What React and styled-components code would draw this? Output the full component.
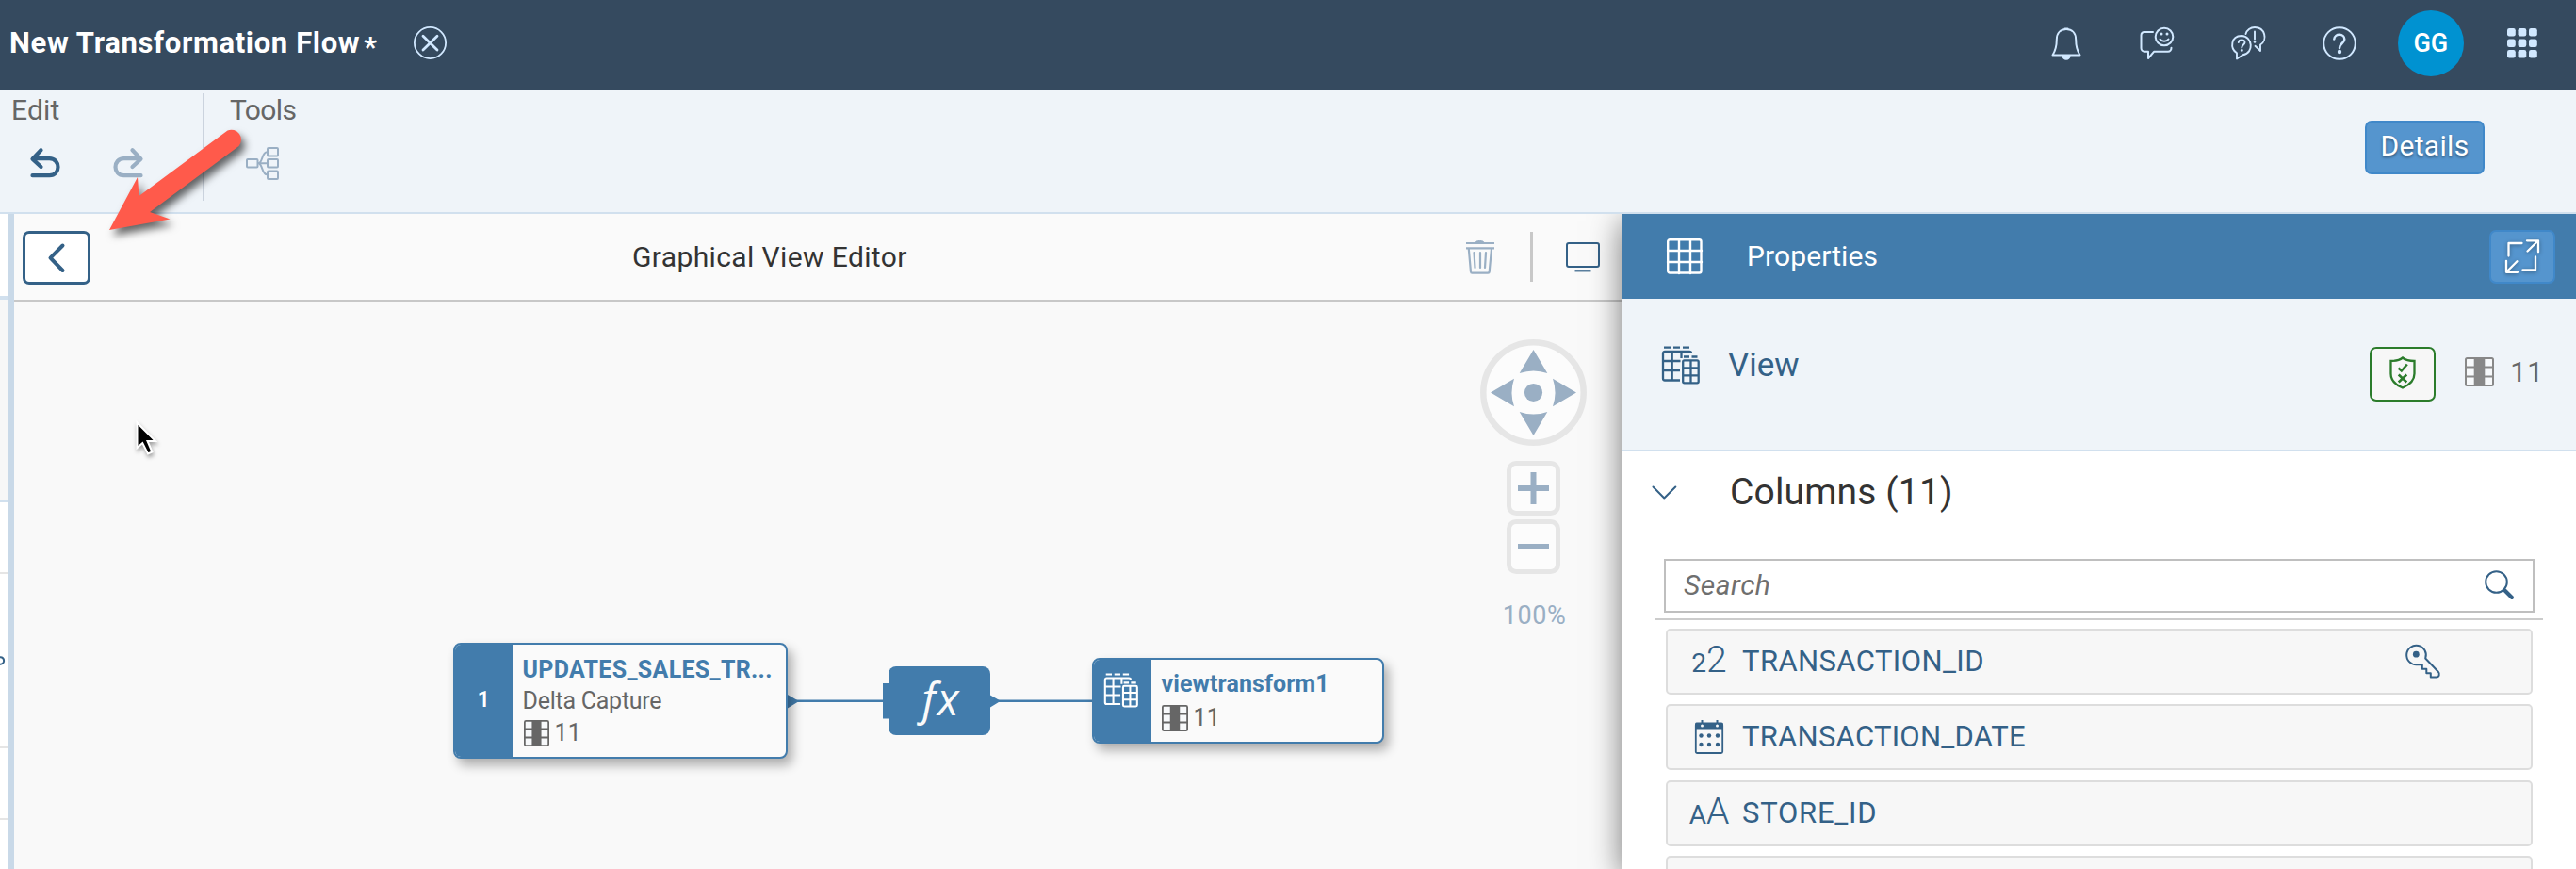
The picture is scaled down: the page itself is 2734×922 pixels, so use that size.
import React from "react";
import styled, { createGlobalStyle } from "styled-components";

const Global = createGlobalStyle`
  html, body { margin: 0; padding: 0; overflow: hidden; }
  * { box-sizing: border-box; }
  body { font-family: Roboto, "Liberation Sans", sans-serif; }
  button { font-family: inherit; }
  svg { display: block; flex: none; overflow: visible; }
`;

const c = {
  shell: "#354a5f",
  shellIcon: "#d1e8ff",
  brand: "#427cac",
  link: "#346187",
  muted: "#9aafc4",
  bar: "#eff4f9",
  line: "#d1e0ee",
  grey: "#666666",
};

const Label = styled.span`
  font-size: ${(p) => p.$size || 30}px;
  font-weight: ${(p) => p.$weight || 400};
  font-style: ${(p) => (p.$italic ? "italic" : "normal")};
  color: ${(p) => p.$color || "#333"};
  letter-spacing: ${(p) => p.$spacing || 0}px;
  line-height: ${(p) => p.$line || 36}px;
  white-space: nowrap;
`;

/* ---------- page frame ---------- */
const Page = styled.div`
  position: relative;
  display: flex;
  flex-direction: column;
  width: 2734px;
  height: 922px;
  overflow: hidden;
  background: #fff;
`;

const ShellBar = styled.header`
  display: flex;
  align-items: center;
  height: 95px;
  flex: none;
  padding: 0 9px 4px 10px;
  background: ${c.shell};
`;

const TitleStar = styled(Label)`
  margin: 8px 39px 0 4px;
`;

const ShellActions = styled.div`
  display: flex;
  margin-left: auto;
`;

const ShellAction = styled.button`
  display: flex;
  align-items: center;
  justify-content: center;
  width: 96.8px;
  height: 70px;
  padding: 0;
  border: 0;
  background: none;
`;

const Avatar = styled.span`
  display: flex;
  align-items: center;
  justify-content: center;
  width: 70px;
  height: 70px;
  border-radius: 50%;
  background: #0092d1;
`;

const Ribbon = styled.div`
  position: relative;
  z-index: 2;
  display: flex;
  height: 132px;
  flex: none;
  padding: 4px 97px 0 0;
  background: ${c.bar};
  border-bottom: 2px solid ${c.line};
`;

const RibbonGroup = styled.section`
  display: flex;
  flex-direction: column;
  height: 114px;
  width: ${(p) => p.$width}px;
  padding: 0 0 0 ${(p) => p.$pad}px;
  border-right: ${(p) => (p.$divided ? "2px solid #cbd3de" : "0")};
`;

const RibbonIcons = styled.div`
  display: flex;
  align-items: center;
  gap: 56px;
  height: 36px;
  margin-top: 20px;
  padding-left: ${(p) => p.$inset}px;
`;

const DetailsButton = styled.button`
  display: flex;
  align-items: center;
  justify-content: center;
  width: 127px;
  height: 57px;
  margin: 29px 0 0 auto;
  padding: 0 0 4px;
  border: 2px solid #4088c9;
  border-radius: 7px;
  background: #5595ce;
  text-shadow: 0 2px 3px rgba(0, 0, 0, 0.45);
`;

const Workspace = styled.main`
  display: flex;
  flex: 1;
  min-height: 0;
`;

/* ---------- collapsed left panel ---------- */
const LeftStrip = styled.aside`
  display: flex;
  flex-direction: column;
  width: 8px;
  flex: none;
  overflow: hidden;
  background: #fff;
`;

const StripCell = styled.div`
  display: flex;
  align-items: center;
  flex: none;
  height: ${(p) => p.$height}px;
  background: ${(p) => p.$bg || "#fff"};
  border-bottom: ${(p) => p.$border || 2}px solid ${(p) => p.$line || "#e5e5e5"};
`;

const Splitter = styled.div`
  width: 7px;
  flex: none;
  background: #c9d9e8;
`;

/* ---------- editor ---------- */
const Editor = styled.section`
  display: flex;
  flex-direction: column;
  width: 1707px;
  flex: none;
`;

const EditorBar = styled.div`
  display: grid;
  grid-template-columns: 600px 1fr 600px;
  align-items: center;
  height: 93px;
  flex: none;
  padding: 0 24px 0 9px;
  background: #fafafa;
  border-bottom: 2px solid #c8c8c8;
`;

const BackButton = styled.button`
  display: flex;
  align-items: center;
  justify-content: center;
  width: 72px;
  height: 57px;
  margin-top: 2px;
  padding: 0;
  border: 3px solid ${c.link};
  border-radius: 7px;
  background: #fff;
`;

const EditorTitle = styled.div`
  padding-left: 47px;
`;

const EditorTools = styled.div`
  display: flex;
  align-items: center;
  justify-content: flex-end;
  gap: 36px;
`;

const ToolDivider = styled.span`
  width: 3px;
  height: 53px;
  margin: 0 -1px 0 1px;
  background: #c8c8c8;
`;

const Canvas = styled.div`
  position: relative;
  flex: 1;
  background: #f9f9f9;
`;

const Links = styled.svg`
  position: absolute;
  left: 0;
  top: 0;
`;

const Node = styled.div`
  position: absolute;
  left: ${(p) => p.$x}px;
  top: ${(p) => p.$y}px;
  width: ${(p) => p.$w}px;
  height: ${(p) => p.$h}px;
  display: flex;
  overflow: hidden;
  border: 2px solid ${c.brand};
  border-radius: 8px;
  background: #fafafa;
  box-shadow: 5px 7px 12px rgba(0, 0, 0, 0.3);
`;

const NodeSide = styled.div`
  display: flex;
  justify-content: center;
  align-items: ${(p) => (p.$top ? "flex-start" : "center")};
  width: 60.5px;
  flex: none;
  padding: ${(p) => (p.$top ? "14px 3px 0 0" : "0 0 3px 0")};
  background: ${c.brand};
`;

const NodeBody = styled.div`
  display: flex;
  flex-direction: column;
  justify-content: center;
  gap: ${(p) => p.$gap}px;
  padding: 1px 0 0 11px;
`;

const NodeCount = styled.div`
  display: flex;
  align-items: center;
  gap: 6px;
  padding-left: ${(p) => p.$inset || 0}px;
`;

const FunctionNode = styled.div`
  position: absolute;
  left: 928px;
  top: 387px;
  display: flex;
  align-items: center;
  justify-content: center;
  width: 108px;
  height: 73px;
  padding: 0 0 5px 4px;
  border-radius: 8px;
  background: ${c.brand};
`;

const FxLabel = styled.span`
  font-family: "Open Sans", "Noto Sans", sans-serif;
  font-style: italic;
  font-weight: 500;
  font-size: 47px;
  line-height: 60px;
  letter-spacing: 2px;
  color: #fafafa;
`;

const Navigator = styled.div`
  position: absolute;
  left: 1556px;
  top: 40px;
  display: flex;
  flex-direction: column;
  align-items: center;
  width: 113px;
`;

const ZoomButton = styled.button`
  display: flex;
  align-items: center;
  justify-content: center;
  width: 57px;
  height: 58px;
  margin-top: ${(p) => p.$gap}px;
  padding: 0;
  border: 5px solid #e6e6e6;
  border-radius: 10px;
  background: #fcfcfc;
`;

const ZoomLevel = styled.div`
  margin: 26px 0 0 2px;
`;

/* ---------- properties panel ---------- */
const Panel = styled.aside`
  position: relative;
  display: flex;
  flex-direction: column;
  flex: 1;
  background: #fff;
  box-shadow: 0 8px 32px rgba(0, 0, 0, 0.55);
`;

const PanelHeader = styled.div`
  display: flex;
  align-items: center;
  height: 90px;
  flex: none;
  padding: 0 22px 0 47px;
  background: ${c.brand};
`;

const PanelTitle = styled.div`
  flex: 1;
  padding-left: 47px;
`;

const ExpandButton = styled.button`
  display: flex;
  align-items: center;
  justify-content: center;
  width: 70px;
  height: 57px;
  padding: 0;
  border: 2px solid #4088c9;
  border-radius: 7px;
  background: #5595ce;
`;

const ViewHeader = styled.div`
  display: flex;
  height: 162px;
  flex: none;
  padding: 50px 34px 0 41px;
  background: ${c.bar};
  border-bottom: 2px solid ${c.line};
`;

const ViewName = styled.div`
  flex: 1;
  padding: 3px 0 0 30px;
`;

const ViewStatus = styled.div`
  display: flex;
  align-items: center;
  height: 58px;
  margin-top: 1px;
`;

const ValidateButton = styled.button`
  display: flex;
  align-items: center;
  justify-content: center;
  width: 70px;
  height: 58px;
  padding: 0 0 4px;
  border: 2px solid #2b7c2b;
  border-radius: 7px;
  background: #f7f7f7;
`;

const ColumnCount = styled.div`
  display: flex;
  align-items: center;
  gap: 17px;
  margin: 0 0 5px 31px;
`;

const SectionHeader = styled.div`
  display: flex;
  align-items: center;
  gap: 56px;
  height: 86px;
  flex: none;
  padding-left: 31px;
`;

const SearchArea = styled.div`
  flex: none;
  margin: 28px 35px 9px;
  padding: 0 9px 6px;
  border-bottom: 2px solid #cccccc;
`;

const SearchField = styled.div`
  display: flex;
  align-items: center;
  justify-content: space-between;
  height: 57px;
  padding: 0 19px 1px 19px;
  border: 2px solid #bfbfbf;
`;

const ColumnList = styled.div`
  display: flex;
  flex-direction: column;
  gap: 10.45px;
  padding: 0 46px;
`;

const ColumnRow = styled.div`
  display: flex;
  align-items: center;
  height: 70px;
  flex: none;
  padding-right: 96px;
  border: 2px solid #dddddd;
  border-radius: 5px;
  background: #f7f7f7;
`;

const TypeCell = styled.span`
  display: flex;
  align-items: baseline;
  justify-content: center;
  width: 88px;
`;

const ColumnName = styled.span`
  display: flex;
  flex: 1;
  margin-left: -9px;
`;

/* ---------- overlays ---------- */
const Overlay = styled.svg`
  position: absolute;
  z-index: 5;
  left: ${(p) => p.$x}px;
  top: ${(p) => p.$y}px;
`;

const ArrowShape = styled.path`
  fill: #ff5a4b;
  filter: drop-shadow(4px 6px 4px rgba(0, 0, 0, 0.6));
`;

const CursorShape = styled.path`
  fill: #000;
  stroke: #fff;
  stroke-width: 2px;
  filter: drop-shadow(1px 3px 2px rgba(0, 0, 0, 0.35));
`;

/* ---------- icons ---------- */
const line = { fill: "none", strokeLinecap: "round", strokeLinejoin: "round" };

const CloseIcon = () => (
  <svg width="35" height="35" viewBox="0 0 35 35" stroke={c.shellIcon} {...line}>
    <circle cx="17.5" cy="17.5" r="16.6" strokeWidth="1.8" />
    <path d="M10 10.2 25 25M25 10.2 10 25" strokeWidth="2.8" />
  </svg>
);

const BellIcon = () => (
  <svg width="32" height="36" viewBox="0 0 32 36" stroke={c.shellIcon} strokeWidth="2" {...line}>
    <path d="M1.5 30.5C5 25 5.8 21 5.8 14 5.8 7 10 3 16 3s10.2 4 10.2 11c0 7 .8 11 4.3 16.5Z" />
    <path d="M14.5 2.5h3M12.5 31.5a3.5 3.2 0 0 0 7 0Z" fill={c.shellIcon} />
  </svg>
);

const FeedbackIcon = () => (
  <svg width="36" height="38" viewBox="0 0 36 38" stroke={c.shellIcon} strokeWidth="2" {...line}>
    <path d="M14 7H5C3 7 1.5 8.5 1.5 10.5V24c0 2 1.500 3.800 3.500 3.800h4V35l6-7.200h15c2 0 3.500-1.800 3.500-4" />
    <circle cx="26" cy="12" r="9.3" />
    <path d="M21.5 14.5c2 3 7 3 9 0" />
    <g fill={c.shellIcon} stroke="none"><circle cx="23" cy="9" r="1.5" /><circle cx="29" cy="9" r="1.5" /></g>
  </svg>
);

const ChatIcon = () => (
  <svg width="36" height="36" viewBox="0 0 36 36" stroke={c.shellIcon} strokeWidth="1.9" {...line}>
    <path d="M6 34.5V28.3C-1.5 23.5-.5 10.2 11 10c12 .3 13.5 18.500 1.500 20.200Z" />
    <path d="M15.5 8c1-4 5-7 9.500-7 11 0 14 13.500 6 18.500V26l-5.500-5.200" />
    <path d="M7.8 17c.3-3.500 7-3.500 6.700.2-.2 2.300-3.200 2.500-3.200 5.300M25 5.500v8" />
    <g fill={c.shellIcon} stroke="none"><circle cx="11.3" cy="25.5" r="1.4" /><circle cx="25" cy="16.5" r="1.3" /></g>
  </svg>
);

const HelpIcon = () => (
  <svg width="36" height="36" viewBox="0 0 36 36" stroke={c.shellIcon} {...line}>
    <circle cx="18" cy="18" r="16.8" strokeWidth="2" />
    <path d="M12.3 13.5c.5-6.500 11.200-6 11 .2-.2 4.300-5.300 4.500-5.300 9.300" strokeWidth="2.5" />
    <circle cx="18" cy="27" r="2.2" fill={c.shellIcon} stroke="none" />
  </svg>
);

const AppsIcon = () => (
  <svg width="32" height="32" viewBox="0 0 32 32" fill={c.shellIcon}>
    {[0, 11.5, 23].map((y) => [0, 11.5, 23].map((x) => <rect key={`${x}-${y}`} x={x} y={y} width="8.8" height="8.5" rx="2.2" />))}
  </svg>
);

const UndoIcon = ({ redo }) => (
  <svg width="32" height="32" viewBox="0 0 32 32" stroke={redo ? c.muted : c.link} strokeWidth="4.2" {...line}>
    <g transform={redo ? "translate(32 0) scale(-1 1)" : undefined}>
      <path d="M11.5 2.2 2.5 11.7 11.5 20M3 11.2h17.500c12 0 12 18 0 18H2.500" />
    </g>
  </svg>
);

const FlowIcon = () => (
  <svg width="35" height="35" viewBox="0 0 35 35" stroke={c.muted} strokeWidth="2" {...line}>
    <rect x="1" y="13" width="11.5" height="8.5" rx="1" />
    {[1, 13, 25.5].map((y) => <rect key={y} x="23" y={y} width="11" height="8.5" rx="1" />)}
    <path d="M13 17.3h9.500M13 17.300c5 0 3.500-12 9.500-12M13 17.300c5 0 3.500 12 9.500 12" />
  </svg>
);

const BackIcon = () => (
  <svg width="18" height="32" viewBox="0 0 18 32" stroke={c.link} strokeWidth="4" {...line}>
    <path d="M15.5 2.5 2.5 15.7 15.5 29" />
  </svg>
);

const TrashIcon = () => (
  <svg width="32" height="36" viewBox="0 0 32 36" stroke={c.muted} {...line}>
    <path d="M1 3h30M1 8.3h30" strokeWidth="2.2" strokeLinecap="butt" />
    <path d="M11 2.5a4.500 2 0 0 1 9 0Z" fill={c.muted} strokeWidth="1" />
    <path d="M3.8 9 6 33.5c.1.9.6 1.200 1.300 1.200h17c.8 0 1.300-.4 1.400-1.200L28 9M9.500 13l1 16M16 13v16M22 13l-1 16" strokeWidth="2.2" />
  </svg>
);

const MonitorIcon = () => (
  <svg width="36" height="32" viewBox="0 0 36 32" stroke={c.link} {...line}>
    <rect x="1" y="1" width="34" height="25" rx="2" strokeWidth="2" />
    <path d="M9.5 30.3h17" strokeWidth="2.2" strokeLinecap="butt" />
  </svg>
);

const Wheel = () => (
  <svg width="113" height="113" viewBox="0 0 113 113" fill={c.muted}>
    <circle cx="56.5" cy="56.5" r="53.2" fill="#fcfcfc" stroke="#e6e6e6" strokeWidth="6.5" />
    {[0, 90, 180, 270].map((a) => (
      <path key={a} transform={`rotate(${a} 56.5 56.5)`} d="M56.5 11 71.3 36Q56.5 31 41.7 36Z" />
    ))}
    <circle cx="56.5" cy="56.5" r="9.6" />
  </svg>
);

const ZoomGlyph = ({ plus }) => (
  <svg width="33" height="34" viewBox="0 0 33 34" stroke={c.muted} strokeWidth="6">
    <path d={plus ? "M0 17h33M16.5 0v34" : "M0 17h33"} />
  </svg>
);

const GridIcon = () => (
  <svg width="38" height="38" viewBox="0 0 38 38" stroke="#fff" {...line}>
    <rect x="1.2" y="1.2" width="35.3" height="35.3" rx="2" strokeWidth="2.4" />
    <path d="M13 1v36M25 1v36M1 13h36M1 25h36" strokeWidth="2.4" />
  </svg>
);

const ShadedSvg = styled.svg`
  filter: drop-shadow(0 1px 2px rgba(0, 0, 0, 0.4));
`;

const ExpandIcon = () => (
  <ShadedSvg width="36" height="36" viewBox="0 0 36 36" stroke="#fff" strokeWidth="2.3" {...line}>
    <path d="M17.5 4h-14v13.500M18.500 32.500H32V18.500M23 1.300h12v12M34.500 1.800 23.500 12.500M13 34.800H1v-12M1.500 34.300 12.500 23.200" />
  </ShadedSvg>
);

const ViewIcon = ({ color, width = 41, bg }) => (
  <svg width={width} height={width} viewBox="0 0 41 41" stroke={color} strokeWidth="2.3" fill="none">
    <path d="M3 1.6h7M13 1.6h7M23 1.6h7" />
    <path d="M32 8V7.5Q32 6 30 6H4Q2 6 2 8V34.500Q2 36.500 4 36.500H20M11.700 6v30.500M21.500 6v7M2 16h18.500M2 26h18" />
    <path d="M24 11.5h6M32.5 11.5h6" />
    <rect x="23.2" y="15.3" width="16.5" height="24" rx="1.5" fill={bg} />
    <path d="M31.5 15.3v24M23.2 23.3h16.500M23.200 31.300h16.500" />
  </svg>
);

const TableIcon = ({ color, width, height }) => (
  <svg width={width} height={height} viewBox="0 0 31 31" preserveAspectRatio="none">
    <rect x="1" y="1" width="29" height="29" rx="1.5" fill="#f7f9fb" stroke={color} strokeWidth="2" />
    <path d="M1 10.5h29M1 20.5h29" stroke={color} strokeWidth="2" />
    <rect x="9.7" y="1" width="11.6" height="29" fill={color} />
  </svg>
);

const ShieldIcon = () => (
  <svg width="28" height="35" viewBox="0 0 28 35" stroke="#2b7c2b" strokeWidth="2.3" fill="none">
    <path d="M14 1.5C11 4 6 5 1.5 5v13.500C1.500 26 7 30.500 14 33.500c7-3 12.500-7.500 12.500-15V5C22 5 17 4 14 1.500Z" />
    <path d="m9.500 12.500 3.300 3 6-7M9.700 19.500l8.600 8M18.300 19.500l-8.600 8" strokeWidth="2.6" />
  </svg>
);

const ChevronIcon = () => (
  <svg width="27" height="15" viewBox="0 0 27 15" stroke={c.link} strokeWidth="2" {...line}>
    <path d="M1.5 1.5 13.3 13.5 25.3 1.5" />
  </svg>
);

const SearchIcon = () => (
  <svg width="32" height="32" viewBox="0 0 32 32" stroke={c.link} {...line}>
    <circle cx="12.5" cy="12.5" r="11.3" strokeWidth="2" />
    <path d="m21.5 21.5 7.5 7.5" strokeWidth="4" />
  </svg>
);

const KeyIcon = () => (
  <svg width="36" height="36" viewBox="0 0 36 36" stroke={c.link} strokeWidth="2" {...line}>
    <path d="M20.2 14.5A10.3 10.3 0 1 0 11 21.3h5.800v4.500h4.500v4.500h4.500V34.500h6c3 0 4-3.500 2-5.800Z" />
    <circle cx="10.3" cy="10.2" r="3.4" fill={c.link} stroke="none" />
  </svg>
);

const CalendarIcon = () => (
  <svg width="32" height="36" viewBox="0 0 32 36" fill={c.link}>
    <path d="M2.5 2.5H29Q31 2.5 31 4.5V9.5H1V4.5Q1 2.5 2.5 2.5Z" />
    <rect x="1.8" y="4" width="28.4" height="31" rx="1.5" fill="none" stroke={c.link} strokeWidth="1.8" />
    <path d="M8.5 0v4M24.5 0v4" stroke={c.link} strokeWidth="2" />
    <circle cx="8.5" cy="6" r="1.5" fill="#f7f7f7" />
    <circle cx="24.5" cy="6" r="1.5" fill="#f7f7f7" />
    {[16.5, 26].map((y) => [7.5, 16, 25].map((x) => <circle key={`${x}-${y}`} cx={x} cy={y} r="2.2" />))}
  </svg>
);

const PortIcon = () => (
  <svg width="6" height="10" viewBox="0 0 6 10" fill="none" stroke={c.link} strokeWidth="2">
    <path d="M0 1.2c5.500-.5 5.500 8 0 7.500" />
  </svg>
);

/* ---------- sections ---------- */
const columns = [
  { type: "number", name: "TRANSACTION_ID", spacing: 0.4, isKey: true },
  { type: "date", name: "TRANSACTION_DATE", spacing: 0.25 },
  { type: "string", name: "STORE_ID", spacing: 0.75 },
  { type: "string", name: "", spacing: 0 },
];

const TypeIcon = ({ type }) => {
  if (type === "date") return <CalendarIcon />;
  const ch = type === "number" ? "2" : "A";
  return (
    <>
      <Label $size={28} $color={c.link} $line={40}>{ch}</Label>
      <Label $size={39} $weight={300} $color={c.link} $line={40}>{ch}</Label>
    </>
  );
};

export default function App() {
  return (
    <Page>
      <Global />
      <ShellBar>
        <Label $size={31} $weight={700} $color="#fff" $spacing={0.65}>New Transformation Flow</Label>
        <TitleStar $weight={700} $color="#fff">*</TitleStar>
        <CloseIcon />
        <ShellActions>
          <ShellAction><BellIcon /></ShellAction>
          <ShellAction><FeedbackIcon /></ShellAction>
          <ShellAction><ChatIcon /></ShellAction>
          <ShellAction><HelpIcon /></ShellAction>
          <ShellAction><Avatar><Label $size={27} $weight={500} $color="#fff">GG</Label></Avatar></ShellAction>
          <ShellAction><AppsIcon /></ShellAction>
        </ShellActions>
      </ShellBar>

      <Ribbon>
        <RibbonGroup $width={217} $pad={12} $divided>
          <Label $color={c.grey} $spacing={0.2}>Edit</Label>
          <RibbonIcons $inset={20}><UndoIcon /><UndoIcon redo /></RibbonIcons>
        </RibbonGroup>
        <RibbonGroup $width={200} $pad={27}>
          <Label $color={c.grey} $spacing={-0.6}>Tools</Label>
          <RibbonIcons $inset={17}><FlowIcon /></RibbonIcons>
        </RibbonGroup>
        <DetailsButton><Label $color="#fff" $spacing={0.3}>Details</Label></DetailsButton>
      </Ribbon>

      <Workspace>
        <LeftStrip>
          <StripCell $height={91} $border={4} $line={c.line} />
          <StripCell $height={215} $bg="#f7f7f7" $line={c.line} />
          <StripCell $height={76} />
          <StripCell $height={185}><PortIcon /></StripCell>
          <StripCell $height={76} />
        </LeftStrip>
        <Splitter />

        <Editor>
          <EditorBar>
            <BackButton><BackIcon /></BackButton>
            <EditorTitle><Label $spacing={0.38}>Graphical View Editor</Label></EditorTitle>
            <EditorTools><TrashIcon /><ToolDivider /><MonitorIcon /></EditorTools>
          </EditorBar>

          <Canvas>
            <Links width="1200" height="602" viewBox="0 0 1200 602" fill={c.brand}>
              <path d="M820 423.7H925M1036 423.7H1146" stroke={c.brand} strokeWidth="2.4" />
              <path d="M820 416.5 833 424 820 432ZM1036 417.5 1047 423.7 1036 430.5ZM922 405h8v37.500h-8Z" />
            </Links>
            <Node $x={466} $y={362} $w={354.5} $h={123}>
              <NodeSide><Label $size={24} $weight={500} $color="#fff">1</Label></NodeSide>
              <NodeBody $gap={0}>
                <Label $size={25} $weight={700} $color={c.brand} $spacing={0.3} $line={35}>UPDATES_SALES_TR...</Label>
                <Label $size={25} $color={c.grey} $spacing={-0.25} $line={32}>Delta Capture</Label>
                <NodeCount $inset={1}>
                  <TableIcon color={c.grey} width={27} height={28} />
                  <Label $size={25} $color={c.grey} $spacing={0.3} $line={36}>11</Label>
                </NodeCount>
              </NodeBody>
            </Node>
            <FunctionNode>
              <FxLabel>fx</FxLabel>
            </FunctionNode>
            <Node $x={1144} $y={378} $w={310} $h={91}>
              <NodeSide $top><ViewIcon color="#fff" width={37} bg={c.brand} /></NodeSide>
              <NodeBody $gap={1}>
                <Label $size={25} $weight={700} $color={c.brand} $spacing={0.1} $line={34}>viewtransform1</Label>
                <NodeCount>
                  <TableIcon color={c.grey} width={28} height={28} />
                  <Label $size={25} $color={c.grey} $spacing={0.3} $line={36}>11</Label>
                </NodeCount>
              </NodeBody>
            </Node>
            <Navigator>
              <Wheel />
              <ZoomButton $gap={16}><ZoomGlyph plus /></ZoomButton>
              <ZoomButton $gap={4}><ZoomGlyph /></ZoomButton>
              <ZoomLevel><Label $size={27} $color={c.muted} $spacing={0.6}>100%</Label></ZoomLevel>
            </Navigator>
          </Canvas>
        </Editor>

        <Panel>
          <PanelHeader>
            <GridIcon />
            <PanelTitle><Label $color="#fff" $spacing={0.1}>Properties</Label></PanelTitle>
            <ExpandButton><ExpandIcon /></ExpandButton>
          </PanelHeader>
          <ViewHeader>
            <ViewIcon color={c.link} bg={c.bar} />
            <ViewName><Label $size={35} $color={c.link}>View</Label></ViewName>
            <ViewStatus>
              <ValidateButton><ShieldIcon /></ValidateButton>
              <ColumnCount>
                <TableIcon color="#888888" width={31} height={31} />
                <Label $color={c.grey} $spacing={1}>11</Label>
              </ColumnCount>
            </ViewStatus>
          </ViewHeader>
          <SectionHeader>
            <ChevronIcon />
            <Label $size={39} $spacing={0.15} $line={44}>Columns (11)</Label>
          </SectionHeader>
          <SearchArea>
            <SearchField>
              <Label $italic $color="#6f6f6f" $spacing={0.5}>Search</Label>
              <SearchIcon />
            </SearchField>
          </SearchArea>
          <ColumnList>
            {columns.map((col, i) => (
              <ColumnRow key={i}>
                {col.name && (
                  <>
                    <TypeCell><TypeIcon type={col.type} /></TypeCell>
                    <ColumnName><Label $size={31} $color={c.link} $spacing={col.spacing}>{col.name}</Label></ColumnName>
                    {col.isKey && <KeyIcon />}
                  </>
                )}
              </ColumnRow>
            ))}
          </ColumnList>
        </Panel>
      </Workspace>

      <Overlay $x={100} $y={120} width="180" height="150" viewBox="100 120 180 150">
        <ArrowShape d="M116 244 146 188 147.5 208 241.5 138.5A10.500 10.500 0 0 1 253.500 155L159 225 180.500 232.500Z" />
      </Overlay>
      <Overlay $x={140} $y={440} width="40" height="50" viewBox="140 440 40 50">
        <CursorShape d="M145.5 448.5V475L151.3 470 157 481.5 161.5 479.5 156.5 468H165Z" />
      </Overlay>
    </Page>
  );
}
